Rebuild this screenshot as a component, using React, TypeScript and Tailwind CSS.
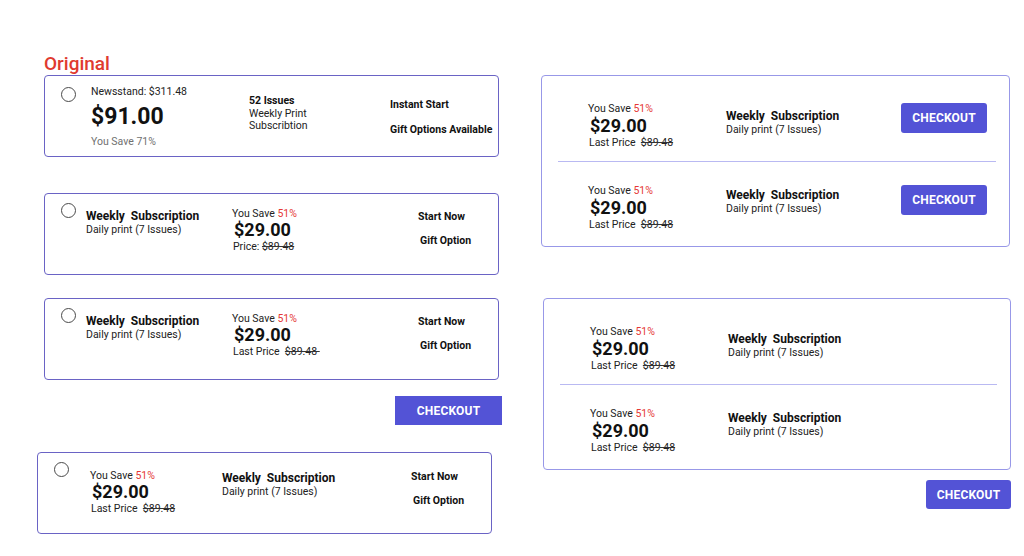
import React from "react";

const font = { fontFamily: "Roboto, 'Noto Sans', Arial, sans-serif" };

function Radio({ className = "" }: { className?: string }) {
  return (
    <div
      className={`w-[15px] h-[15px] shrink-0 rounded-full border border-[#4a4a4a] bg-white ${className}`}
    />
  );
}

function Struck({ children }: { children: React.ReactNode }) {
  return <span className="line-through decoration-[#333]">{children}</span>;
}

function CheckoutButton({ className = "" }: { className?: string }) {
  return (
    <button
      className={`flex items-center justify-center bg-[#5353d6] text-white text-[12px] font-bold tracking-[0.2px] ${className}`}
    >
      CHECKOUT
    </button>
  );
}

// Price stack: "You Save 51%" / $29.00 / old price
function PriceStack({
  label,
  priceLh = "leading-[20px]",
  tail = false,
}: {
  label: "Price:" | "Last Price";
  priceLh?: string;
  tail?: boolean;
}) {
  return (
    <div className="flex flex-col">
      <div className="text-[10.5px] leading-[13px] text-[#222]">
        You Save <span className="text-[#e53935]">51%</span>
      </div>
      <div className={`ml-[2px] text-[18px] font-bold text-[#111] ${priceLh}`}>$29.00</div>
      <div className="ml-[1px] text-[10.5px] leading-[13px] text-[#222] whitespace-pre">
        {label === "Price:" ? (
          <>
            Price: <Struck>$89.48</Struck>
          </>
        ) : (
          <>
            Last Price  <Struck>{tail ? "$89.48\u00a0" : "$89.48"}</Struck>
          </>
        )}
      </div>
    </div>
  );
}

function PlanTitle() {
  return (
    <>
      <div className="text-[12px] leading-[14px] font-bold text-[#111] whitespace-pre">
        Weekly  Subscription
      </div>
      <div className="text-[10.5px] leading-[13px] text-[#222]">Daily print (7 Issues)</div>
    </>
  );
}

function Perks() {
  return (
    <div className="flex flex-col text-[10.5px] leading-[13px] font-bold text-[#111]">
      <div>Start Now</div>
      <div className="mt-[11px] ml-[2px]">Gift Option</div>
    </div>
  );
}

function OriginalCard() {
  return (
    <div className="ml-[7px] w-[455px] h-[82px] rounded-[4px] border border-[#6a63c5] pt-[9px] pl-[16px] flex items-start">
      <Radio className="mt-[2px]" />
      <div className="ml-[15px] w-[158px] flex flex-col">
        <div className="text-[10.5px] leading-[13px] text-[#222]">Newsstand: $311.48</div>
        <div className="mt-[5px] text-[23px] leading-[28px] font-bold text-[#111]">$91.00</div>
        <div className="mt-[4px] text-[10.5px] leading-[13px] text-[#707070]">You Save 71%</div>
      </div>
      <div className="mt-[10px] w-[141px] flex flex-col text-[10.5px] leading-[12.5px] text-[#222]">
        <div className="font-bold text-[#111]">52 Issues</div>
        <div>Weekly Print</div>
        <div>Subscribtion</div>
      </div>
      <div className="mt-[13px] flex flex-col text-[10.5px] leading-[13px] font-bold text-[#111]">
        <div>Instant Start</div>
        <div className="mt-[12px]">Gift Options Available</div>
      </div>
    </div>
  );
}

function RadioCard({
  label,
  tail = false,
  className = "",
}: {
  label: "Price:" | "Last Price";
  tail?: boolean;
  className?: string;
}) {
  return (
    <div
      className={`ml-[7px] w-[455px] h-[82px] rounded-[4px] border border-[#6a63c5] pt-[9px] pl-[16px] flex items-start ${className}`}
    >
      <Radio />
      <div className="ml-[10px] mt-[6px] w-[146px] flex flex-col">
        <PlanTitle />
      </div>
      <div className="mt-[4px] w-[186px]">
        <PriceStack label={label} tail={tail} />
      </div>
      <div className="mt-[7px]">
        <Perks />
      </div>
    </div>
  );
}

function PriceFirstCard() {
  return (
    <div className="w-[455px] h-[82px] rounded-[4px] border border-[#6a63c5] pt-[9px] pl-[16px] flex items-start">
      <Radio />
      <div className="ml-[21px] mt-[7px] w-[132px]">
        <PriceStack label="Last Price" />
      </div>
      <div className="mt-[9px] w-[189px] flex flex-col">
        <PlanTitle />
      </div>
      <div className="mt-[8px]">
        <Perks />
      </div>
    </div>
  );
}

function OfferRow({ withButton, first }: { withButton: boolean; first: boolean }) {
  return (
    <div className="flex items-start pl-[46px]">
      <div className="w-[138px]">
        <PriceStack label="Last Price" priceLh="leading-[21px]" />
      </div>
      <div className={`w-[175px] flex flex-col ${first ? "mt-[7px]" : "mt-[4px]"}`}>
        <PlanTitle />
      </div>
      {withButton && (
        <CheckoutButton
          className={`w-[86px] h-[30px] rounded-[3px] ${first ? "mt-[1px]" : "mt-[1px]"}`}
        />
      )}
    </div>
  );
}

function OfferCard({ withButton, className = "" }: { withButton: boolean; className?: string }) {
  return (
    <div
      className={`h-[172px] rounded-[4px] border border-[#9898e8] pt-[26px] flex flex-col ${className}`}
    >
      <OfferRow withButton={withButton} first />
      <div className="mt-[12px] ml-[16px] mr-[13px] h-px bg-[#b9b9f2]" />
      <div className="mt-[22px]">
        <OfferRow withButton={withButton} first={false} />
      </div>
    </div>
  );
}

export default function App() {
  return (
    <div className="w-[1024px] h-[556px] bg-white flex overflow-hidden" style={font}>
      {/* radio-list variants */}
      <div className="ml-[37px] w-[465px] flex flex-col">
        <div className="mt-[53px] ml-[7px] text-[19px] leading-[22px] font-medium text-[#e03a2f]">
          Original
        </div>
        <OriginalCard />
        <RadioCard label="Price:" className="mt-[36px]" />
        <RadioCard label="Last Price" tail className="mt-[23px]" />
        <CheckoutButton className="mt-[16px] self-end w-[107px] h-[29px]" />
        <div className="mt-[27px]">
          <PriceFirstCard />
        </div>
      </div>

      {/* grouped-offer variants */}
      <div className="ml-[39px] w-[470px] pt-[75px] flex flex-col">
        <OfferCard withButton className="w-[469px]" />
        <OfferCard withButton={false} className="mt-[51px] ml-[2px] w-[468px]" />
        <CheckoutButton className="mt-[10px] self-end w-[85px] h-[29px] rounded-[3px]" />
      </div>
    </div>
  );
}
